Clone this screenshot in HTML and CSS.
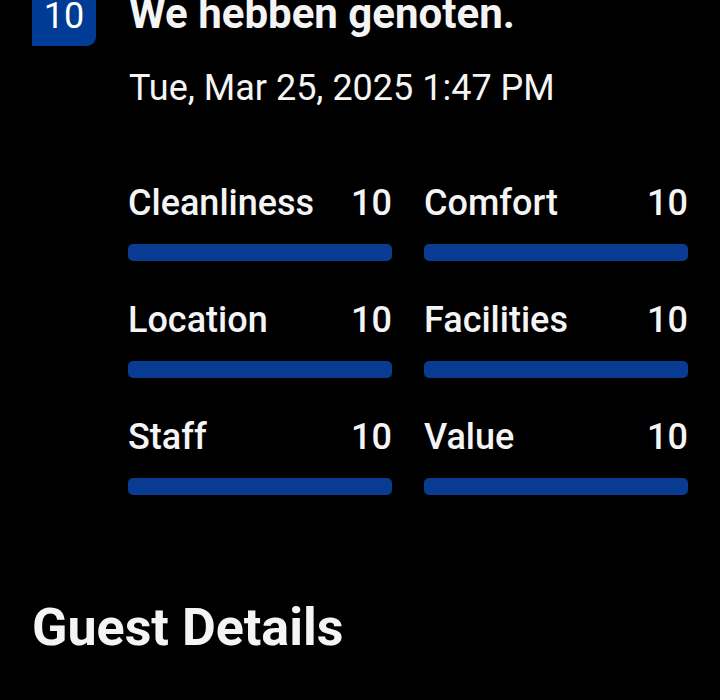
FILE: index.html
```html
<!DOCTYPE html>
<html lang="en">
<head>
<meta charset="utf-8">
<title>Review</title>
<link rel="stylesheet" href="styles.css">
</head>
<body>
<main class="page">
  <section class="review">
    <div class="score-badge">10</div>
    <div class="review-body">
      <h2 class="review-title">We hebben genoten.</h2>
      <p class="review-date">Tue, Mar 25, 2025 1:47 PM</p>
      <div class="ratings">
        <div class="rating">
          <div class="rating-head"><span>Cleanliness</span><span>10</span></div>
          <div class="bar"></div>
        </div>
        <div class="rating">
          <div class="rating-head"><span>Comfort</span><span>10</span></div>
          <div class="bar"></div>
        </div>
        <div class="rating">
          <div class="rating-head"><span>Location</span><span>10</span></div>
          <div class="bar"></div>
        </div>
        <div class="rating">
          <div class="rating-head"><span>Facilities</span><span>10</span></div>
          <div class="bar"></div>
        </div>
        <div class="rating">
          <div class="rating-head"><span>Staff</span><span>10</span></div>
          <div class="bar"></div>
        </div>
        <div class="rating">
          <div class="rating-head"><span>Value</span><span>10</span></div>
          <div class="bar"></div>
        </div>
      </div>
    </div>
  </section>
  <h1 class="section-title">Guest Details</h1>
</main>
</body>
</html>
```
FILE: styles.css
```css
html, body {
  margin: 0;
  padding: 0;
  background: #000;
}
body {
  font-family: Roboto, "Noto Sans", sans-serif;
  color: #f4f4f4;
  width: 720px;
  height: 700px;
  overflow: hidden;
}
.page {
  padding: 0 32px;
}
.review {
  display: flex;
  gap: 32px;
  align-items: flex-start;
}
.score-badge {
  flex: 0 0 64px;
  height: 46px;
  background: #003b95;
  border-radius: 0 0 9px 0;
  color: #fff;
  font-size: 36px;
  line-height: 30px;
  text-align: center;
  padding-top: 1px;
  box-sizing: border-box;
}
.review-body {
  flex: 1;
  min-width: 0;
}
.review-title {
  margin: 0;
  font-size: 42px;
  font-weight: 700;
  line-height: 28px;
  padding-left: 1px;
}
.review-date {
  margin: 40px 0 0;
  font-size: 36px;
  font-weight: 400;
  line-height: 40px;
  padding-left: 1px;
}
.ratings {
  margin-top: 75px;
  display: grid;
  grid-template-columns: 264px 264px;
  column-gap: 32px;
  row-gap: 39px;
}
.rating-head {
  display: flex;
  justify-content: space-between;
  font-size: 36px;
  font-weight: 500;
  line-height: 40px;
}
.bar {
  margin-top: 21px;
  height: 17px;
  border-radius: 5px;
  background: #0a3b92;
}
.section-title {
  margin: 103px 0 0;
  font-size: 52px;
  font-weight: 700;
  line-height: 60px;
}
```
